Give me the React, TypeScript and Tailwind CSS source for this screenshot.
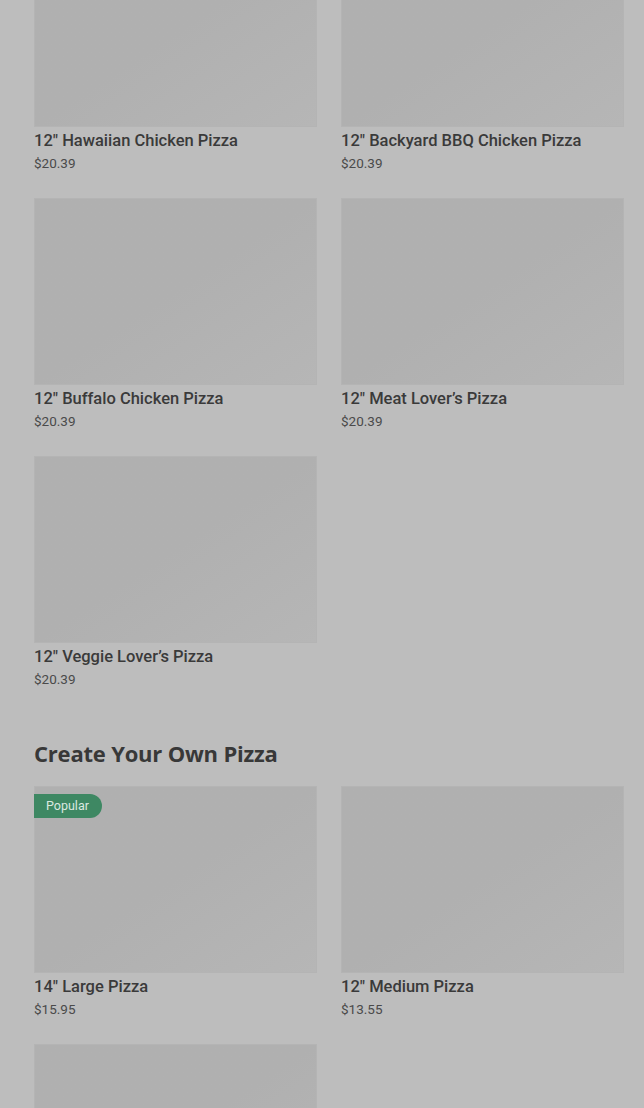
import React from 'react';

interface Item {
  name: string;
  price: string;
  badge?: string;
}

const specialty: Item[] = [
  { name: '12" Hawaiian Chicken Pizza', price: '$20.39' },
  { name: '12" Backyard BBQ Chicken Pizza', price: '$20.39' },
  { name: '12" Buffalo Chicken Pizza', price: '$20.39' },
  { name: '12" Meat Lover\u2019s Pizza', price: '$20.39' },
  { name: '12" Veggie Lover\u2019s Pizza', price: '$20.39' },
];

const createOwn: Item[] = [
  { name: '14" Large Pizza', price: '$15.95', badge: 'Popular' },
  { name: '12" Medium Pizza', price: '$13.55' },
];

const ItemCard = ({ item }: { item: Item }) => (
  <div className="flex flex-col">
    <div className="relative h-[187px] bg-gradient-to-br from-[#b0b0b0] via-[#b0b0b0] to-[#b6b6b6] border border-[#b4b4b4]">
      {item.badge && (
        <span className="absolute left-[-1px] top-[7px] h-[24px] pl-[12px] pr-[13px] flex items-center rounded-r-full bg-[#3e8863] text-[#dbe8e0] text-[12.5px]">
          {item.badge}
        </span>
      )}
    </div>
    <div className="mt-[4px] text-[16.5px] leading-[20px] font-medium text-[#3a3a3a]">
      {item.name}
    </div>
    <div className="mt-[3px] text-[13.5px] leading-[18px] text-[#4a4a4a]">
      {item.price}
    </div>
  </div>
);

export default function App() {
  return (
    <div
      className="h-[1108px] bg-[#bdbdbd] overflow-hidden"
      style={{ fontFamily: 'Roboto, "Noto Sans", sans-serif' }}
    >
      <div className="pl-[34px] pr-[20px] -mt-[60px]">
        <div className="grid grid-cols-2 gap-x-[24px] gap-y-[26px]">
          {specialty.map((item, i) => (
            <ItemCard key={i} item={item} />
          ))}
        </div>

        <h2
          className="mt-[51px] text-[22px] leading-[28px] font-bold text-[#383838] tracking-[-0.2px]"
          style={{ fontFamily: '"Open Sans", Lato, sans-serif' }}
        >
          Create Your Own Pizza
        </h2>

        <div className="mt-[19px] grid grid-cols-2 gap-x-[24px] gap-y-[26px]">
          {createOwn.map((item, i) => (
            <ItemCard key={i} item={item} />
          ))}
          <div className="h-[187px] bg-gradient-to-br from-[#b0b0b0] via-[#b0b0b0] to-[#b6b6b6] border border-[#b4b4b4]" />
        </div>
      </div>
    </div>
  );
}
